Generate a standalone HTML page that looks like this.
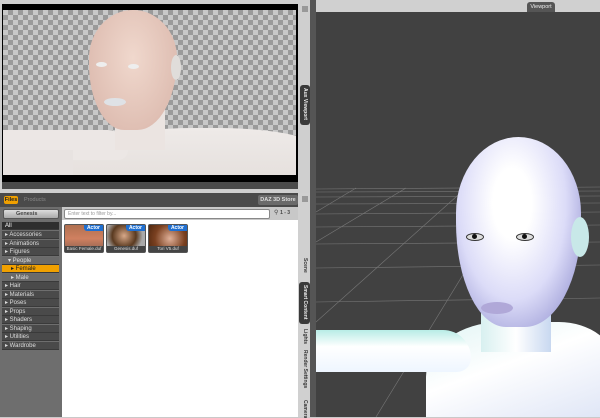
<!DOCTYPE html>
<html><head><meta charset="utf-8"><style>
*{margin:0;padding:0;box-sizing:border-box}
body{width:600px;height:417px;overflow:hidden;background:#c9c9c9;font-family:"Liberation Sans",sans-serif;position:relative}
.a{position:absolute}
.chk{background-color:#c8c8c8;background-image:linear-gradient(45deg,#9a9a9a 25%,transparent 25%,transparent 75%,#9a9a9a 75%),linear-gradient(45deg,#9a9a9a 25%,transparent 25%,transparent 75%,#9a9a9a 75%);background-size:10px 10px;background-position:0 0,5px 5px}
.vt{writing-mode:vertical-rl;font-size:5px;color:#333;font-weight:bold;white-space:nowrap}
.cat{position:absolute;left:2px;width:57px;height:8px;font-size:6px;color:#ddd;background:#4a4a4a;padding-left:3px;line-height:8px;border-bottom:1px solid #3a3a3a}
.th{position:absolute;top:224px;width:40px;height:29px;border:1px solid #555;border-radius:2px;background:#555}
.th span{position:absolute;right:0;top:0;background:#1f6fd0;color:#fff;font-size:5px;font-weight:bold;padding:0 3px;border-radius:0 0 0 3px}
.th b{position:absolute;bottom:0;left:0;right:0;height:6px;background:#444;color:#ddd;font-size:4.5px;font-weight:normal;text-align:center;line-height:6px}
</style></head><body>
<div class="a" style="left:0;top:0;width:310px;height:193px;background:#cfcfcf"></div>
<div class="a" style="left:2px;top:4px;width:296px;height:178px;background:#000"></div>
<div class="a chk" style="left:3px;top:10px;width:293px;height:165px;overflow:hidden">
 <div class="a" style="left:60px;top:118px;width:260px;height:60px;background:linear-gradient(#eeeae8,#e4dedb);border-radius:50% 40% 0 0/60% 40% 0 0"></div>
 <div class="a" style="left:-5px;top:120px;width:130px;height:30px;background:#ece7e5;border-radius:0 20px 10px 0"></div>
 <div class="a" style="left:0px;top:140px;width:70px;height:30px;background:#e8e3e1"></div>
 <div class="a" style="left:112px;top:95px;width:50px;height:45px;background:#ebe4e1"></div>
 <div class="a" style="left:86px;top:0px;width:88px;height:120px;background:radial-gradient(ellipse at 50% 40%,#f0d8cd,#d8b4a8);border-radius:50% 50% 45% 40%/40% 40% 60% 55%"></div>
 <div class="a" style="left:168px;top:45px;width:10px;height:25px;background:#e0ddda;border-radius:50%"></div>
 <div class="a" style="left:93px;top:52px;width:11px;height:5px;background:#eee;border-radius:50%"></div>
 <div class="a" style="left:125px;top:54px;width:11px;height:5px;background:#eee;border-radius:50%"></div>
 <div class="a" style="left:101px;top:88px;width:22px;height:8px;background:#dfe2e6;border-radius:50%"></div>
</div>
<div class="a" style="left:2px;top:182px;width:296px;height:7px;background:#4b4b4b"></div>
<div class="a" style="left:300px;top:85px;width:10px;height:40px;background:#3a3a3a;border-radius:3px"></div>
<div class="a vt" style="left:302px;top:88px;color:#eee">Aux Viewport</div>
<div class="a" style="left:302px;top:6px;width:6px;height:6px;background:#999"></div>
<div class="a" style="left:310px;top:0;width:6px;height:417px;background:#555"></div>
<div class="a" style="left:316px;top:0;width:284px;height:13px;background:#d0d0d0"></div>
<div class="a" style="left:527px;top:2px;width:28px;height:10px;background:#555;border-radius:3px 3px 0 0;color:#eee;font-size:5.5px;text-align:center;line-height:10px">Viewport</div>
<div class="a" style="left:316px;top:12px;width:284px;height:405px;background:#414141;overflow:hidden">
 <svg class="a" style="left:0;top:0" width="284" height="405" viewBox="0 0 284 405">
  <g stroke="#777" stroke-width="0.6" fill="none">
   <line x1="0" y1="177" x2="284" y2="175"/><line x1="0" y1="180" x2="284" y2="179"/><line x1="0" y1="185" x2="284" y2="184"/><line x1="0" y1="192" x2="284" y2="191"/><line x1="0" y1="202" x2="284" y2="200"/><line x1="0" y1="215" x2="284" y2="213"/><line x1="0" y1="232" x2="284" y2="230"/><line x1="0" y1="256" x2="284" y2="253"/><line x1="0" y1="290" x2="284" y2="286"/><line x1="0" y1="340" x2="284" y2="335"/>
   <line x1="0" y1="230" x2="90" y2="176"/><line x1="0" y1="310" x2="150" y2="176"/><line x1="60" y1="405" x2="200" y2="176"/><line x1="190" y1="405" x2="250" y2="176"/><line x1="0" y1="200" x2="40" y2="176"/>
  </g>
 </svg>
 <div class="a" style="left:110px;top:310px;width:190px;height:110px;background:linear-gradient(160deg,#e0f4f4,#fff 40%,#d8e0f4);border-radius:40% 30% 0 0/50% 40% 0 0"></div>
 <div class="a" style="left:-5px;top:318px;width:160px;height:42px;background:linear-gradient(#b8ece6,#fff 40%,#eef6ff);border-radius:0 40px 20px 0"></div>
 <div class="a" style="left:165px;top:270px;width:70px;height:70px;background:linear-gradient(90deg,#d8f0f0,#fff,#c8d8f0)"></div>
 <div class="a" style="left:140px;top:125px;width:125px;height:190px;background:radial-gradient(ellipse at 45% 35%,#fff 20%,#dcdcf8 55%,#a8a8dc 80%,#8ad0c8);border-radius:50% 50% 45% 40%/40% 40% 55% 55%"></div>
 <div class="a" style="left:255px;top:205px;width:18px;height:40px;background:#c8e8e8;border-radius:50%"></div>
 <div class="a" style="left:150px;top:221px;width:18px;height:8px;background:#ddd;border:1.5px solid #333;border-radius:50%"></div>
 <div class="a" style="left:200px;top:221px;width:18px;height:8px;background:#ddd;border:1.5px solid #333;border-radius:50%"></div>
 <div class="a" style="left:156px;top:222px;width:5px;height:5px;background:#111;border-radius:50%"></div>
 <div class="a" style="left:206px;top:222px;width:5px;height:5px;background:#111;border-radius:50%"></div>
 <div class="a" style="left:165px;top:290px;width:32px;height:12px;background:#b0a8d8;border-radius:50%"></div>
</div>
<div class="a" style="left:0;top:193px;width:310px;height:224px;background:#4a4a4a"></div>
<div class="a" style="left:4px;top:196px;width:14px;height:8px;background:#f0a000;border-radius:2px;font-size:5.5px;font-weight:bold;color:#222;text-align:center;line-height:8px">Files</div>
<div class="a" style="left:24px;top:196px;font-size:5.5px;color:#888;line-height:8px">Products</div>
<div class="a" style="left:258px;top:195px;width:40px;height:10px;background:#6a6a6a;border-radius:2px;font-size:5.5px;font-weight:bold;color:#ddd;text-align:center;line-height:10px">DAZ 3D Store</div>
<div class="a" style="left:0;top:207px;width:62px;height:210px;background:#6e6e6e"></div>
<div class="a" style="left:3px;top:209px;width:56px;height:10px;background:linear-gradient(#ddd,#aaa);border:1px solid #555;border-radius:2px;font-size:5.5px;font-weight:bold;color:#444;line-height:8px;padding-left:12px">Genesis</div>
<div class="cat" style="top:222px;background:#2e2e2e;color:#fff">All</div>
<div class="cat" style="top:231px">▸ Accessories</div>
<div class="cat" style="top:239.5px">▸ Animations</div>
<div class="cat" style="top:248px">▸ Figures</div>
<div class="cat" style="top:256.5px;background:#6a6a6a;padding-left:6px">▾ People</div>
<div class="cat" style="top:265px;background:#f0a000;color:#222;padding-left:9px">▸ Female</div>
<div class="cat" style="top:273.5px;background:#6a6a6a;padding-left:9px">▸ Male</div>
<div class="cat" style="top:282px">▸ Hair</div>
<div class="cat" style="top:290.5px">▸ Materials</div>
<div class="cat" style="top:299px">▸ Poses</div>
<div class="cat" style="top:307.5px">▸ Props</div>
<div class="cat" style="top:316px">▸ Shaders</div>
<div class="cat" style="top:324.5px">▸ Shaping</div>
<div class="cat" style="top:333px">▸ Utilities</div>
<div class="cat" style="top:341.5px">▸ Wardrobe</div>
<div class="a" style="left:62px;top:207px;width:236px;height:13px;background:#c8c8c8"></div>
<div class="a" style="left:64px;top:209px;width:206px;height:10px;background:#fff;border:1px solid #888;border-radius:2px;font-size:5px;color:#999;line-height:8px;padding-left:3px">Enter text to filter by...</div>
<div class="a" style="left:274px;top:209px;font-size:6px;color:#444">⚲ <b style="font-size:5px">1 - 3</b></div>
<div class="a" style="left:62px;top:220px;width:236px;height:197px;background:#fff"></div>
<div class="th" style="left:64px;background:linear-gradient(#b07050,#d08060 50%,#8a6050)"><span>Actor</span><b>Basic Female.duf</b></div>
<div class="th" style="left:106px;background:radial-gradient(circle at 45% 40%,#d8a888,#5a3a20 45%,#aaa 70%)"><span>Actor</span><b>Genesis.duf</b></div>
<div class="th" style="left:148px;background:radial-gradient(circle at 55% 50%,#e0b098,#7a4020 60%,#502810)"><span>Actor</span><b>Tori V5.duf</b></div>
<div class="a" style="left:298px;top:193px;width:12px;height:224px;background:#d0d0d0"></div>
<div class="a" style="left:302px;top:196px;width:6px;height:6px;background:#999"></div>
<div class="a vt" style="left:302px;top:258px">Scene</div>
<div class="a" style="left:299px;top:282px;width:11px;height:42px;background:#3a3a3a;border-radius:3px"></div>
<div class="a vt" style="left:302px;top:285px;color:#eee">Smart Content</div>
<div class="a vt" style="left:302px;top:329px">Lights</div>
<div class="a vt" style="left:302px;top:350px">Render Settings</div>
<div class="a vt" style="left:302px;top:400px">Camera</div>
</body></html>
